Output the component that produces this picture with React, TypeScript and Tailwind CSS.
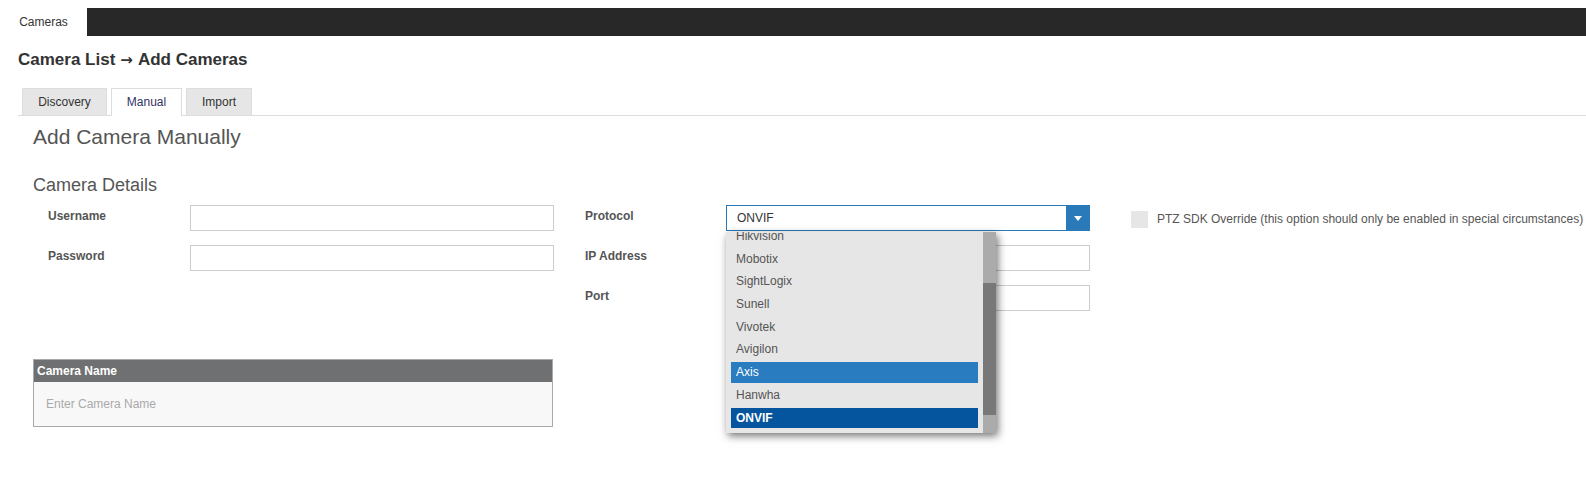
import React from "react";

const font = { fontFamily: '"Liberation Sans", Arial, sans-serif' };

const options = [
  "Hikvision",
  "Mobotix",
  "SightLogix",
  "Sunell",
  "Vivotek",
  "Avigilon",
  "Axis",
  "Hanwha",
  "ONVIF",
];

function TextInput() {
  return <div className="w-[364px] h-[26px] border border-[#cccccc] bg-white" />;
}

function Label({ children, w }: { children: React.ReactNode; w: string }) {
  return <div className={`${w} h-[26px] leading-[22px] text-[12px] font-bold text-[#555555]`}>{children}</div>;
}

function ProtocolSelect() {
  return (
    <div className="relative w-[364px] h-[26px]">
      <div className="flex h-full border border-[#2a7ab9] bg-white">
        <div className="flex-1 pl-[10px] leading-[24px] text-[12px] text-[#333333]">ONVIF</div>
        <div className="w-[24px] -my-px -mr-px bg-[#2a7ab9] flex items-center justify-center">
          <svg width="8" height="5" viewBox="0 0 8 5">
            <path d="M0 0 L8 0 L4 5 Z" fill="#ffffff" />
          </svg>
        </div>
      </div>

      {/* open option list, scrolled to the bottom */}
      <div className="absolute left-0 top-[27px] z-10 w-[270px] h-[201px] flex bg-[#e6e6e6] shadow-[2px_3px_8px_rgba(0,0,0,0.55)]">
        <div className="flex-1 h-full overflow-hidden flex flex-col justify-end px-[5px] pb-[5px]">
          {options.map((o) => {
            const axis = o === "Axis";
            const onvif = o === "ONVIF";
            return (
              <div
                key={o}
                className={
                  "shrink-0 h-[20.5px] mt-[2.2px] pl-[5px] leading-[20px] text-[12px] " +
                  (axis
                    ? "bg-[#2a7cc0] text-white"
                    : onvif
                    ? "bg-[#04559e] text-white font-bold"
                    : "text-[#555555]")
                }
              >
                {o}
              </div>
            );
          })}
        </div>
        <div className="w-[13px] h-full bg-[#ababab] flex flex-col">
          <div className="h-[51px]" />
          <div className="h-[132px] bg-[#787878]" />
        </div>
      </div>
    </div>
  );
}

export default function App() {
  return (
    <div className="w-[1586px] min-h-[480px] bg-white text-[#333333]" style={font}>
      {/* top nav */}
      <div className="mt-[8px] h-[28px] flex">
        <div className="w-[87px] bg-white text-center text-[12px] leading-[28px] text-[#333333]">Cameras</div>
        <div className="flex-1 bg-[#282828]" />
      </div>

      <h1 className="mt-[13px] ml-[18px] text-[17px] leading-[22px] font-bold text-[#333333]">
        Camera List
        <span className="inline-block mx-[5px] text-[15px]" style={{ fontFamily: '"DejaVu Sans", sans-serif' }}>
          →
        </span>
        Add Cameras
      </h1>

      {/* tabs */}
      <div className="mt-[17px] ml-[18px] border-b border-[#dddddd] flex gap-[4px] pl-[4px]">
        <div className="w-[85px] h-[27px] leading-[26px] text-center text-[12px] bg-[#e6e6e6] border border-[#dddddd] border-b-0">Discovery</div>
        <div className="w-[71px] h-[28px] -mb-px leading-[26px] text-center text-[12px] bg-white border border-[#dddddd] border-b-0 text-[#333366]">Manual</div>
        <div className="w-[66px] h-[27px] leading-[26px] text-center text-[12px] bg-[#e6e6e6] border border-[#dddddd] border-b-0">Import</div>
      </div>

      <div className="pl-[33px]">
        <h2 className="mt-[8px] text-[21px] leading-[26px] text-[#555555]">Add Camera Manually</h2>
        <h3 className="mt-[24px] text-[18px] leading-[22px] text-[#555555]">Camera Details</h3>

        <div className="mt-[9px] flex items-start">
          {/* left column */}
          <div className="flex flex-col gap-[14px] pl-[15px]">
            <div className="flex">
              <Label w="w-[142px]">Username</Label>
              <TextInput />
            </div>
            <div className="flex">
              <Label w="w-[142px]">Password</Label>
              <TextInput />
            </div>
          </div>

          {/* middle column */}
          <div className="ml-[31px] flex flex-col gap-[14px]">
            <div className="flex">
              <Label w="w-[141px]">Protocol</Label>
              <ProtocolSelect />
            </div>
            <div className="flex">
              <Label w="w-[141px]">IP Address</Label>
              <TextInput />
            </div>
            <div className="flex">
              <Label w="w-[141px]">Port</Label>
              <TextInput />
            </div>
          </div>

          {/* right column */}
          <div className="ml-[41px] mt-[5px] flex items-center gap-[9px]">
            <div className="w-[17px] h-[17px] bg-[#e6e6e6]" />
            <span className="text-[12px] text-[#555555]">
              PTZ SDK Override (this option should only be enabled in special circumstances)
            </span>
          </div>
        </div>

        {/* camera name panel */}
        <div className="mt-[48px] w-[520px] border border-[#a9a9a9]">
          <div className="h-[22px] bg-[#6f7071] pl-[3px] leading-[22px] text-[12px] font-bold text-white">Camera Name</div>
          <div className="h-[44px] bg-[#f8f8f8] pl-[12px] leading-[44px] text-[12px] text-[#aaaaaa]">Enter Camera Name</div>
        </div>
      </div>
    </div>
  );
}
